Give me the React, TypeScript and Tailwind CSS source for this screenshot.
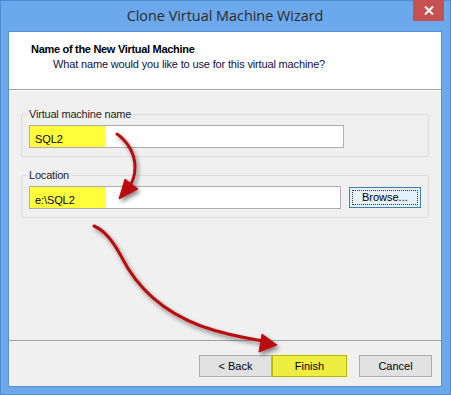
import React from 'react';

const ui = { fontFamily: '"Liberation Sans", Tahoma, sans-serif' };

const Group = ({ label, children }: { label: string; children: React.ReactNode }) => (
  <div className="relative mx-[12px] border border-[#dcdcdc] rounded-[2px] px-[7px] pt-[10px] pb-[8px]">
    <span className="absolute left-[5px] top-[-8px] bg-[#f0f0f0] px-[2px] text-[11px] tracking-[-0.2px] leading-[14px] text-[#1e1e1e]">
      {label}
    </span>
    {children}
  </div>
);

const Field = ({ value }: { value: string }) => (
  <div className="relative w-[315px] h-[23px] bg-white border border-[#abadb3]">
    <div className="absolute left-0 top-0 bottom-0 w-[76px] bg-[#ffff3c]" />
    <span className="relative pl-[5px] text-[11px] tracking-[-0.1px] leading-[21px] text-black">{value}</span>
  </div>
);

const Btn = ({ children, cls }: { children: React.ReactNode; cls: string }) => (
  <div className={`h-[22px] flex items-center justify-center text-[11px] text-black border ${cls}`}>
    {children}
  </div>
);

export default function App() {
  return (
    <div className="relative w-[451px] h-[395px] bg-[#6ba8ec] border border-[#4f8bd0] flex flex-col pl-[7px] pr-[8px] pb-[7px]" style={ui}>
      <div className="relative h-[30px] flex items-center justify-center">
        <span className="text-[14.4px] text-[#2b2b2b] mt-[-1px]" style={{ fontFamily: '"Open Sans", "Noto Sans", sans-serif' }}>
          Clone Virtual Machine Wizard
        </span>
        <div className="absolute right-[-2px] top-[-1px] w-[31px] h-[21px] bg-[#c75050] flex items-center justify-center">
          <svg width="10" height="9" viewBox="0 0 10 9">
            <path d="M1 0.5 L9 8.5 M9 0.5 L1 8.5" stroke="white" strokeWidth="2" />
          </svg>
        </div>
      </div>

      <div className="flex-1 flex flex-col bg-[#f0f0f0] border border-[#5a90d0]">
        <div className="h-[58px] bg-white border-b border-[#a0a0a0] pl-[22px] pt-[10px]">
          <div className="text-[11px] font-bold tracking-[-0.3px] leading-[15px] text-black">Name of the New Virtual Machine</div>
          <div className="text-[11px] tracking-[-0.15px] leading-[15px] pl-[22px] text-[#10104a]">
            What name would you like to use for this virtual machine?
          </div>
        </div>

        <div className="flex-1 flex flex-col pt-[23px] gap-[18px] border-t border-white">
          <Group label="Virtual machine name">
            <Field value="SQL2" />
          </Group>
          <Group label="Location">
            <div className="flex items-center gap-[8px]">
              <Field value="e:\SQL2" />
              <div className="w-[73px] h-[21px] border border-[#3c7fb1] bg-[#e5f1fb] p-[2px]">
                <div className="w-full h-full border border-dotted border-[#333] flex items-center justify-center text-[11px] text-black">
                  Browse...
                </div>
              </div>
            </div>
          </Group>
        </div>

        <div className="h-[46px] border-t border-[#a0a0a0] flex items-start justify-end gap-[12px] pt-[14px] pr-[9px]">
          <div className="flex">
            <Btn cls="w-[73px] bg-[#e1e1e1] border-[#adadad]">&lt; Back</Btn>
            <Btn cls="w-[75px] bg-[#eeee40] border-[#b8b800]">Finish</Btn>
          </div>
          <Btn cls="w-[73px] bg-[#e1e1e1] border-[#adadad]">Cancel</Btn>
        </div>
      </div>

      <svg className="absolute left-0 top-0 pointer-events-none" width="451" height="395" viewBox="0 0 451 395">
        <defs>
          <filter id="sh" x="-20%" y="-20%" width="140%" height="140%">
            <feDropShadow dx="2" dy="3" stdDeviation="2" floodColor="#000" floodOpacity="0.45" />
          </filter>
        </defs>
        <g filter="url(#sh)" fill="#b90f0f" stroke="#b90f0f">
          <path d="M116 133 C126 140 134 152 134 166 C134 175 131 182 128 186" fill="none" strokeWidth="3" strokeLinecap="round" />
          <path d="M118 198 L124 178 L137 188 Z" strokeWidth="1" />
          <path d="M93 225 C103 229 112 240 120 255 C135 285 160 310 200 325 C222 333 244 337 262 340" fill="none" strokeWidth="3" strokeLinecap="round" />
          <path d="M276 344 L261 333 L258 351 Z" strokeWidth="1" />
        </g>
      </svg>
    </div>
  );
}
